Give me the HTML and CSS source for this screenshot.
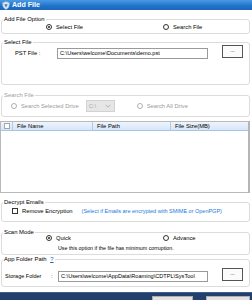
FILE: index.html
```html
<!DOCTYPE html>
<html>
<head>
<meta charset="utf-8">
<link rel="stylesheet" href="styles.css">
</head>
<body>
<div class="window">
  <div class="titlebar">
    <svg class="app-icon" width="8" height="9" viewBox="0 0 8 9">
      <path d="M4 0.5 L7.5 1.8 L7.2 5 Q6.5 7.6 4 8.6 Q1.5 7.6 0.8 5 L0.5 1.8 Z" fill="#dce8f5" stroke="#7fa8d6" stroke-width="0.6"/>
      <path d="M2.3 3.2 L5.7 3.2 L4 6.6 Z" fill="#3b78bf"/>
    </svg>
    <span class="title">Add File</span>
  </div>
  <div class="body">
    <fieldset class="group g-option">
      <legend>Add File Option</legend>
      <div class="radio-row">
        <span class="radio checked col-a"><span class="dot"></span>Select File</span>
        <span class="radio"><span class="dot"></span>Search File</span>
      </div>
    </fieldset>

    <fieldset class="group g-select">
      <legend>Select File</legend>
      <div class="path-row">
        <span class="path-label pst">PST File :</span>
        <span class="textbox">C:\Users\welcome\Documents\demo.pst</span>
        <span class="btn-browse">...</span>
      </div>
    </fieldset>

    <fieldset class="group g-search disabled">
      <legend>Search File</legend>
      <div class="search-row">
        <span class="radio off"><span class="dot"></span>Search Selected Drive</span>
        <span class="dropdown">C:\<svg class="chev" width="6" height="4" viewBox="0 0 6 4"><path d="M0.5 0.7 L3 3.2 L5.5 0.7" fill="none" stroke="#a8a8a8" stroke-width="0.8"/></svg></span>
        <span class="radio off all"><span class="dot"></span>Search All Drive</span>
      </div>
    </fieldset>

    <div class="table">
      <div class="thead">
        <span class="th th-check"><span class="checkbox"></span></span>
        <span class="th th-name">File Name</span>
        <span class="th th-path">File Path</span>
        <span class="th th-size">File Size(MB)</span>
      </div>
      <div class="tbody"></div>
    </div>

    <fieldset class="group g-decrypt">
      <legend>Decrypt Emails</legend>
      <div class="check-row">
        <span class="checkbox"></span>
        <span class="check-label">Remove Encryption</span>
        <span class="hint">(Select if Emails are encrypted with SMIME or OpenPGP)</span>
      </div>
    </fieldset>

    <fieldset class="group g-scan">
      <legend>Scan Mode</legend>
      <div class="radio-row scan">
        <span class="radio checked col-a"><span class="dot"></span>Quick</span>
        <span class="radio"><span class="dot"></span>Advance</span>
      </div>
      <div class="scan-note">Use this option if the file has minimum corruption.</div>
    </fieldset>

    <fieldset class="group g-app">
      <legend>App Folder Path <a class="help">?</a></legend>
      <div class="path-row storage">
        <span class="path-label sto">Storage Folder</span>
        <span class="colon">:</span>
        <span class="textbox">C:\Users\welcome\AppData\Roaming\CDTPL\SysTool</span>
        <span class="btn-browse">...</span>
      </div>
    </fieldset>
  </div>
  <div class="footer">
    <span class="fbtn b1"></span>
    <span class="fbtn b2"></span>
  </div>
</div>
</body>
</html>
```

FILE: styles.css
```css
* { box-sizing: border-box; }
html, body { margin: 0; padding: 0; }
body { width: 252px; height: 300px; overflow: hidden; background: #fff; }

.window {
  width: 252px;
  height: 300px;
  display: flex;
  flex-direction: column;
  font-family: "Liberation Sans", Arial, sans-serif;
  font-size: 5.8px;
  color: #000;
  background: #fff;
}

.titlebar {
  height: 10px;
  flex: none;
  display: flex;
  align-items: center;
  padding-left: 2px;
  gap: 2px;
  background: linear-gradient(#4a9be4, #1f72c8 60%, #1b68bd);
}
.app-icon { display: block; }
.title { color: #fff; font-weight: bold; font-size: 7.1px; line-height: 10px; }

.body {
  flex: 1;
  display: flex;
  flex-direction: column;
  padding: 5px 2px 0 1px;
  min-height: 0;
}

.group {
  margin: 0;
  padding: 0;
  min-width: 0;
  border: 1px solid #dcdcdc;
  border-radius: 3px;
}
.group legend {
  margin-left: 1px;
  padding: 0 1px;
  font-size: 5.9px;
  line-height: 8px;
  height: 8px;
  color: #000;
}
.disabled legend { color: #a0a0a0; }

/* radios */
.radio { display: flex; align-items: center; gap: 4px; white-space: nowrap; }
.radio .dot {
  width: 6px; height: 6px; border-radius: 50%;
  border: 1px solid #333;
  background: #fff;
  position: relative;
  flex: none;
}
.radio.checked .dot::after {
  content: "";
  position: absolute;
  left: 1px; top: 1px;
  width: 2px; height: 2px;
  border-radius: 50%;
  background: #222;
}
.radio.off { color: #9a9a9a; }
.radio.off .dot { border-color: #b0b0b0; }

.radio-row {
  height: 8px;
  display: grid;
  grid-template-columns: 117px 1fr;
  padding-left: 44px;
  align-items: center;
}
.g-option { padding-bottom: 2px; }

/* path rows */
.path-row {
  display: flex;
  align-items: flex-start;
  height: 14px;
}
.g-select .path-row { margin-top: -1px; }
.g-select { margin-top: 4px; padding-bottom: 25px; }
.path-label { line-height: 11px; margin-top: 3px; white-space: nowrap; }
.pst { margin-left: 13px; width: 42px; }
.textbox {
  margin-top: 3px;
  width: 151px;
  height: 11px;
  border: 1px solid #9a9a9a;
  background: #fff;
  padding-left: 2px;
  line-height: 9px;
  font-size: 5.6px;
  white-space: nowrap;
  overflow: hidden;
}
.btn-browse {
  margin-left: 14px;
  width: 21px;
  height: 13px;
  border: 1px solid #555;
  background: #fbfbfb;
  text-align: center;
  line-height: 9px;
  font-size: 5.5px;
}

/* search */
.g-search { margin-top: 6px; padding-bottom: 4px; }
.search-row {
  height: 13px;
  display: flex;
  align-items: center;
  padding-left: 9px;
}
.dropdown {
  margin-left: 7px;
  width: 29px;
  height: 12px;
  background: #e6e6e6;
  border: 1px solid #d2d2d2;
  color: #a8a8a8;
  display: flex;
  align-items: center;
  justify-content: space-between;
  padding: 0 3px 0 2px;
}
.chev { display: block; }
.radio.all { margin-left: 22px; }

/* table */
.table {
  margin: 4px 0 0 -1px;
  height: 72px;
  flex: none;
  border: 1px solid #b9b9b9;
  border-right: 2px solid #b5b5b5;
  display: flex;
  flex-direction: column;
  background: #fff;
}
.thead {
  height: 9px;
  flex: none;
  display: grid;
  grid-template-columns: 12px 80px 78px 1fr;
  background: linear-gradient(#eef4fc, #d6e6f8);
  border-bottom: 1px solid #a9c3e6;
}
.th {
  display: flex;
  align-items: center;
  border-right: 1px solid #b3c9e6;
  padding-left: 4px;
  white-space: nowrap;
  line-height: 8px;
}
.th:last-child { border-right: none; }
.th-check { padding-left: 3px; }
.th-check .checkbox { width: 6px; height: 6px; border-color: #9aa8b8; }
.tbody { flex: 1; }

.checkbox {
  display: block;
  width: 6px; height: 6px;
  border: 1px solid #333;
  background: #fff;
  flex: none;
}

/* decrypt */
.g-decrypt { margin-top: 5px; padding-bottom: 5px; }
.check-row {
  height: 10px;
  display: flex;
  align-items: center;
  padding-left: 10px;
  white-space: nowrap;
}
.check-label { margin-left: 4px; }
.hint { margin-left: 9px; color: #1b78dc; font-size: 5.5px; }

/* scan */
.g-scan { margin-top: 6px; padding-bottom: 2px; }
.radio-row.scan { margin-top: -2px; }
.scan-note {
  margin-top: 2px;
  height: 8px;
  line-height: 8px;
  padding-left: 56px;
  font-size: 5.3px;
  white-space: nowrap;
}

/* app folder */
.g-app { margin-top: 0; padding-bottom: 4px; }
.help { color: #1b5fd6; text-decoration: underline; margin-left: 2px; }
.storage { margin-top: 5px; }
.sto { margin-left: 3px; width: 46px; font-size: 5.5px; }
.colon { line-height: 11px; margin-top: 3px; width: 7px; }
.storage .textbox { width: 150px; }

/* footer */
.footer {
  height: 8px;
  flex: none;
  background: #233f6c;
  border-top: 1px solid #3d5d8f;
  display: flex;
  justify-content: flex-end;
  padding: 3px 2px 0 0;
  gap: 13px;
  overflow: hidden;
}
.fbtn {
  height: 10px;
  background: #e1e1e1;
  border: 1px solid #adadad;
}
.b1 { width: 41px; }
.b2 { width: 44px; }
```
